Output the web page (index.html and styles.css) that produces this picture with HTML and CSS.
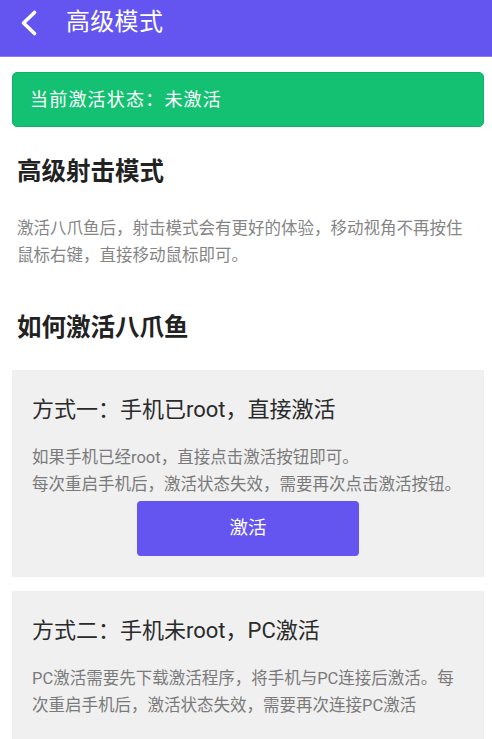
FILE: index.html
```html
<!DOCTYPE html>
<html lang="zh-CN">
<head>
  <meta charset="UTF-8" />
  <meta name="viewport" content="width=device-width, initial-scale=1.0"/>
  <title>高级模式</title>
  <link rel="stylesheet" href="styles.css">
</head>
<body>
  <div class="topbar">
    <svg class="back" width="20" height="28" viewBox="0 0 20 28">
      <polyline points="15.5,3.5 4.5,14 15.5,24.5" fill="none" stroke="white" stroke-width="3.6" stroke-linecap="round" stroke-linejoin="round"/>
    </svg>
    <div class="topbar-title">高级模式</div>
  </div>

  <div class="page">
    <div class="status">当前激活状态：未激活</div>

    <div class="section">
      <div class="heading">高级射击模式</div>
      <div class="desc">激活八爪鱼后，射击模式会有更好的体验，移动视角不再按住鼠标右键，直接移动鼠标即可。</div>
    </div>

    <div class="section">
      <div class="heading heading-how">如何激活八爪鱼</div>
    </div>

    <div class="card">
      <div class="card-title">方式一：手机已root，直接激活</div>
      <div class="card-text">如果手机已经root，直接点击激活按钮即可。<br>每次重启手机后，激活状态失效，需要再次点击激活按钮。</div>
      <div class="btn">激活</div>
    </div>

    <div class="card">
      <div class="card-title">方式二：手机未root，PC激活</div>
      <div class="card-text">PC激活需要先下载激活程序，将手机与PC连接后激活。每次重启手机后，激活状态失效，需要再次连接PC激活</div>
    </div>
  </div>
</body>
</html>
```

FILE: styles.css
```css
html, body {
  margin: 0;
  padding: 0;
  background-color: white;
  font-family: Roboto, "Noto Sans CJK SC", sans-serif;
  overflow: hidden;
}

.topbar {
  height: 56px;
  background: #6455f1;
  border-bottom: 1px solid #8a7ff4;
  display: flex;
  align-items: flex-start;
  padding-left: 19px;
}

.back {
  margin-top: 9px;
}

.topbar-title {
  margin-left: 27px;
  margin-top: 6px;
  font-size: 24px;
  line-height: 32px;
  color: white;
  letter-spacing: 0.3px;
}

.page {
  padding: 15px 8px 0 12px;
}

.status {
  height: 53px;
  background: #14c172;
  border: 1px solid #10b168;
  border-radius: 5px;
  color: white;
  font-size: 18px;
  letter-spacing: 1.2px;
  line-height: 54px;
  padding-left: 17px;
}

.section {
  padding: 0 14px 0 5px;
}

.heading {
  margin-top: 28px;
  font-size: 24.5px;
  line-height: 34px;
  font-weight: bold;
  color: #222;
}

.heading-how {
  margin-top: 42px;
}

.desc {
  margin-top: 26px;
  font-size: 16.5px;
  line-height: 27px;
  color: #858585;
}

.card {
  margin-top: 25px;
  background: #f0f0f0;
  padding: 25px 16px 21px 20px;
}

.card + .card {
  margin-top: 14px;
}

.card-title {
  font-size: 22px;
  line-height: 30px;
  color: #2a2a2a;
}

.card-text {
  margin-top: 20px;
  font-size: 16.5px;
  line-height: 26.5px;
  color: #7a7a7a;
}

.btn {
  width: 222px;
  height: 55px;
  margin: 3px 0 0 105px;
  background: #6455f1;
  border-radius: 4px;
  color: white;
  font-size: 18.5px;
  line-height: 55px;
  text-align: center;
}
```
